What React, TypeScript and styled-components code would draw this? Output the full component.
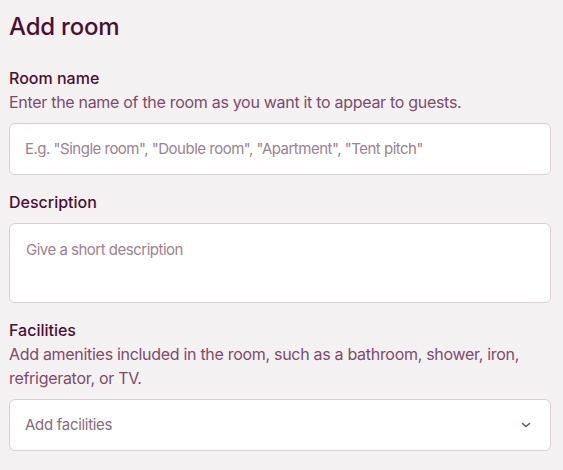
import React from 'react';
import styled, {createGlobalStyle} from "styled-components";

const GlobalStyle = createGlobalStyle`
  html, body {
    margin: 0;
    padding: 0;
    background: #f4f1f2;
  }
  body {
    font-family: Inter, "Noto Sans", sans-serif;
    color: #4a0f33;
  }
`

const Page = styled.div`
  display: flex;
  flex-direction: column;
  padding: 11px 12px 0 9px;
`

const Title = styled.h1`
  margin: 0 0 23px;
  font-size: 24px;
  line-height: 32px;
  font-weight: 500;
  color: #4a0f33;
  letter-spacing: -0.2px;
`

const Field = styled.div`
  display: flex;
  flex-direction: column;
  margin-bottom: 15px;
`

const Label = styled.label`
  font-size: 16px;
  line-height: 24px;
  font-weight: 500;
  color: #4a0f33;
  margin-bottom: 9px;
`

const Hint = styled.p`
  margin: -9px 0 9px;
  font-size: 16px;
  line-height: 24px;
  letter-spacing: -0.3px;
  color: #7d4c6a;
`

const Box = styled.div<{ tall?: boolean }>`
  display: flex;
  align-items: ${({tall}) => tall ? 'flex-start' : 'center'};
  justify-content: space-between;
  box-sizing: border-box;
  height: ${({tall}) => tall ? '80px' : '52px'};
  padding: ${({tall}) => tall ? '14px 16px' : '0 16px 0 15px'};
  background: #fff;
  border: 1px solid #dccfd6;
  border-radius: 6px;
`

const Placeholder = styled.span`
  font-size: 15px;
  line-height: 24px;
  letter-spacing: -0.5px;
  color: #9c8192;
`

const SelectText = styled.span`
  font-size: 15px;
  line-height: 24px;
  letter-spacing: -0.3px;
  color: #8a6a7d;
`

const Chevron = styled.svg`
  margin-right: 3px;
  color: #7d4c6a;
`

const App = () => {
  return (
    <Page>
      <GlobalStyle/>
      <Title>Add room</Title>
      <Field>
        <Label>Room name</Label>
        <Hint>Enter the name of the room as you want it to appear to guests.</Hint>
        <Box>
          <Placeholder>E.g. "Single room", "Double room", "Apartment", "Tent pitch"</Placeholder>
        </Box>
      </Field>
      <Field>
        <Label>Description</Label>
        <Box tall>
          <Placeholder>Give a short description</Placeholder>
        </Box>
      </Field>
      <Field>
        <Label>Facilities</Label>
        <Hint>Add amenities included in the room, such as a bathroom, shower, iron, refrigerator, or TV.</Hint>
        <Box>
          <SelectText>Add facilities</SelectText>
          <Chevron width="10" height="6" viewBox="0 0 10 6" fill="none">
            <path d="M1.5 1.5 L5 4.5 L8.5 1.5" stroke="currentColor" strokeWidth="1.6" strokeLinecap="round" strokeLinejoin="round"/>
          </Chevron>
        </Box>
      </Field>
    </Page>
  );
};

export default App;
